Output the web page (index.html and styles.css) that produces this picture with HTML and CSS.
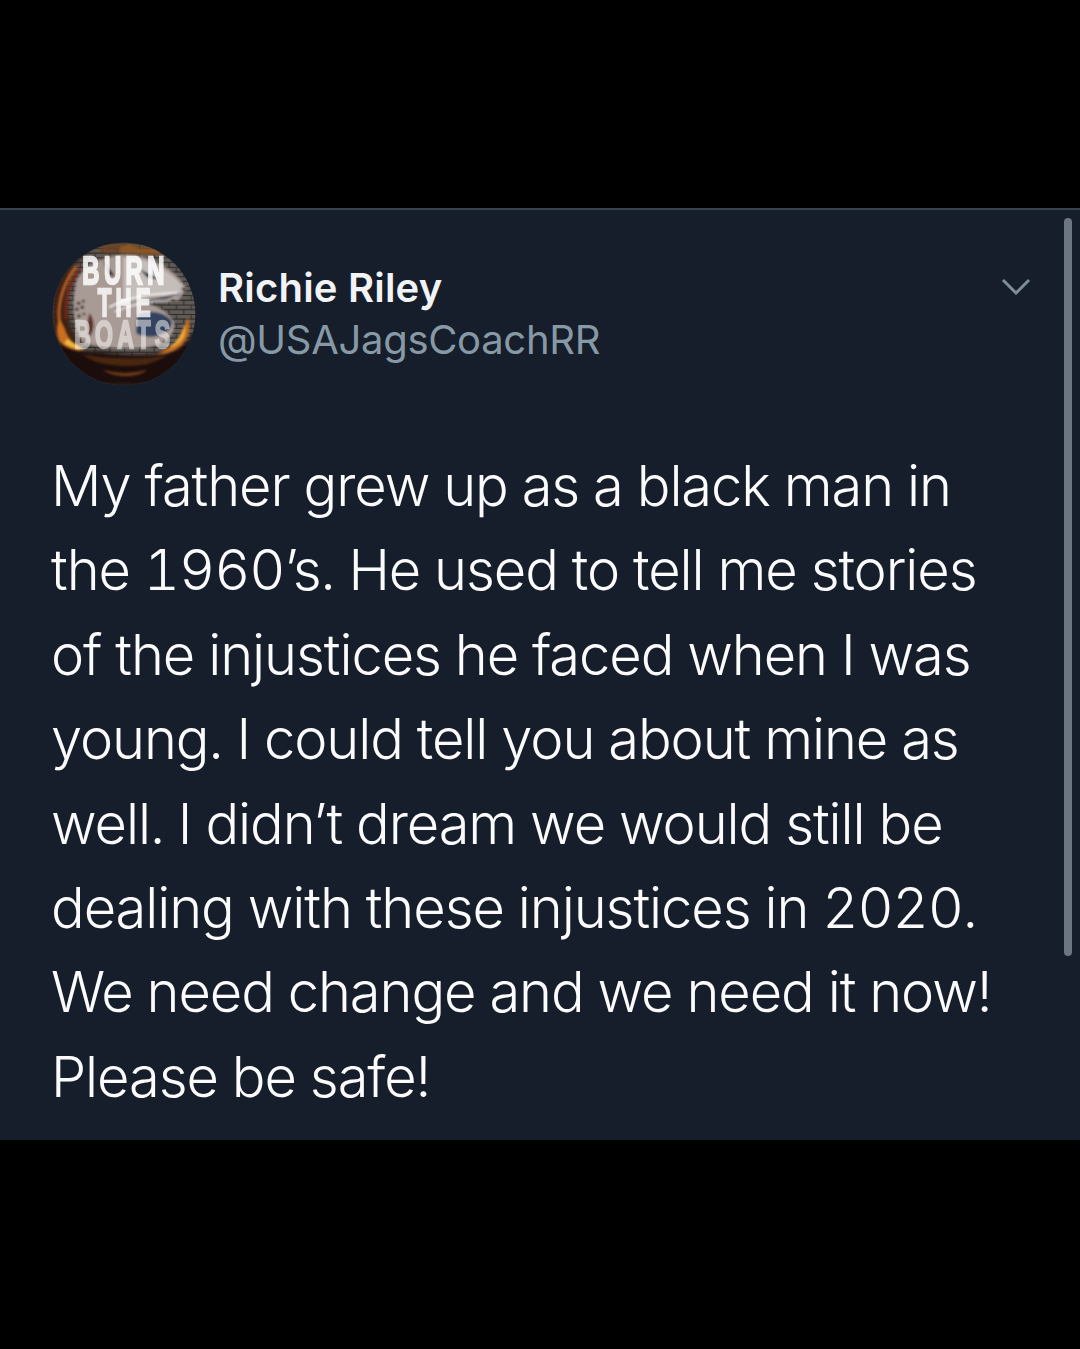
FILE: index.html
```html
<!DOCTYPE html>
<html lang="en">
<head>
<meta charset="utf-8">
<title>Richie Riley</title>
<link rel="stylesheet" href="styles.css">
</head>
<body>
<main class="tweet">
  <header class="head">
    <svg class="avatar" viewBox="38 38 428 428" aria-hidden="true">
      <defs>
        <clipPath id="c"><circle cx="252" cy="252" r="212"/></clipPath>
        <filter id="b2" x="-10%" y="-10%" width="120%" height="120%"><feGaussianBlur stdDeviation="2.5"/></filter>
        <filter id="b5" x="-20%" y="-20%" width="140%" height="140%"><feGaussianBlur stdDeviation="6"/></filter>
        <pattern id="brick" width="44" height="28" patternUnits="userSpaceOnUse">
          <rect width="44" height="28" fill="#5f5a56"/>
          <path d="M0 1H44M0 15H44M12 1V15M34 15V28" stroke="#2f2b29" stroke-width="3"/>
        </pattern>
      </defs>
      <g clip-path="url(#c)">
        <rect x="38" y="38" width="428" height="428" fill="url(#brick)"/>
        <g filter="url(#b5)">
          <path d="M38 38H190C130 70 95 110 85 170 76 240 90 300 130 340L60 380 38 300Z" fill="#3a2015"/>
          <path d="M170 48C250 36 320 50 360 70L260 66 190 70Z" fill="#6a4224"/>
          <path d="M38 345C70 340 120 370 170 362 230 372 310 380 370 368 410 360 450 330 466 300V466H38Z" fill="#1f0f08"/>
        </g>
        <g filter="url(#b2)">
          <path d="M110 110C70 160 50 230 62 285" fill="none" stroke="#b85d20" stroke-width="9"/>
          <path d="M122 118C84 165 74 215 80 268" fill="none" stroke="#7a2419" stroke-width="8"/>
          <path d="M60 265C50 290 50 315 62 335 76 350 100 360 126 362 106 345 84 325 76 295Z" fill="#c96e1c"/>
          <path d="M74 340C92 350 112 358 136 358 118 346 100 336 84 326Z" fill="#f2b840"/>
          <path d="M442 262C452 292 444 325 422 346 398 366 372 372 350 370 382 358 410 340 424 308Z" fill="#c76c1c"/>
          <path d="M432 285C438 305 432 325 414 340 404 348 394 352 384 355 406 338 422 318 432 285Z" fill="#f0aa3a"/>
          <path d="M130 372C200 386 310 390 380 374 350 398 300 410 240 406 190 404 150 392 130 372Z" fill="#4a2710"/>
          <path d="M190 418C230 430 280 430 320 418 300 442 220 444 190 418Z" fill="#6e3a16"/>
          <path d="M240 52 268 44 300 58 340 56 372 76 300 74 240 70Z" fill="#8a5628"/>
        </g>
        <g filter="url(#b2)">
          <path d="M108 170C112 120 170 84 250 76 330 72 400 118 440 176L412 214C380 200 340 204 300 218 340 222 380 240 400 275 410 310 370 350 310 352 240 358 170 350 128 335 102 290 96 220 108 170Z" fill="#a89a94"/>
          <path d="M250 84C320 82 390 122 432 176L404 204C360 190 300 196 250 222Z" fill="#c4bdba"/>
          <path d="M292 254C320 238 370 244 392 270 400 292 380 312 345 318 320 322 300 318 288 308Z" fill="#30425f"/>
          <path d="M300 222 415 192" fill="none" stroke="#27303f" stroke-width="5"/>
          <path d="M208 232C270 200 340 190 412 190" fill="none" stroke="#f2f2f2" stroke-width="5"/>
          <path d="M224 246C280 220 330 212 392 212" fill="none" stroke="#e8e8e8" stroke-width="4"/>
          <path d="M300 120 360 150 322 144Z" fill="#1f2533"/>
          <path d="M190 90 225 140 205 135Z" fill="#2e2e30"/>
          <path d="M150 250C165 270 165 300 150 320 142 295 142 270 150 250Z" fill="#5a3128"/>
          <path d="M420 176 436 172 434 186Z" fill="#2c2a2a"/>
          <circle cx="117" cy="220" r="5" fill="#33231d"/><circle cx="131" cy="214" r="4" fill="#33231d"/>
          <circle cx="112" cy="238" r="5" fill="#33231d"/><circle cx="128" cy="232" r="5" fill="#33231d"/>
          <circle cx="118" cy="258" r="5" fill="#33231d"/><circle cx="133" cy="252" r="4" fill="#33231d"/>
        </g>
        <text class="av av-a" transform="translate(128 164) scale(.6 1)">BURN</text>
        <text class="av av-b" transform="translate(174 258) scale(.56 1)">THE</text>
        <text class="av av-c" transform="translate(104 354) scale(.58 1)">BOATS</text>
      </g>
    </svg>
    <div class="names">
      <div class="name">Richie Riley</div>
      <div class="handle">@USAJagsCoachRR</div>
    </div>
    <svg class="chev" viewBox="0 0 30 18" aria-hidden="true"><path d="M2 3 15 16 28 3"/></svg>
  </header>
  <p class="body">My father grew up as a black man in<br>the 1960’s. He used to tell me stories<br>of the injustices he faced when I was<br>young. I could tell you about mine as<br>well. I didn’t dream we would still be<br>dealing with these injustices in 2020.<br>We need change and we need it now!<br>Please be safe!</p>
  <div class="thumb"></div>
</main>
</body>
</html>
```
FILE: styles.css
```css
html, body { margin: 0; padding: 0; background: #000; }
body { width: 1080px; height: 1349px; padding-top: 208px; box-sizing: border-box; font-family: Inter, "Liberation Sans", sans-serif; }
.tweet { position: relative; height: 932px; box-sizing: border-box; background: #151e2a; border-top: 2px solid #36434f; padding: 32px 52px 0; }
.head { display: flex; align-items: center; gap: 22px; }
.avatar { width: 144px; height: 144px; flex: none; }
.av { font-family: "Liberation Sans", sans-serif; font-weight: 700; font-size: 118px; letter-spacing: 22px; fill: #fff; stroke: #fff; stroke-width: 7px; }
.av-a { opacity: .85; }
.av-b { opacity: .8; }
.av-c { opacity: .5; }
.names { flex: 1; }
.name { color: #f2f3f5; font-size: 40px; line-height: 52px; font-weight: 600; letter-spacing: 0.2px; }
.handle { color: #8899a6; font-size: 40px; line-height: 52px; letter-spacing: -0.3px; }
.chev { align-self: flex-start; width: 30px; height: 18px; margin-top: 35px; margin-right: -3px; fill: none; stroke: #7f8c99; stroke-width: 3; }
.body { margin: 58px 0 0 -1px; color: #fbfbfb; font-size: 56px; line-height: 84.4px; font-weight: 300; letter-spacing: -1.08px; white-space: nowrap; font-variant-numeric: tabular-nums; }
.thumb { position: absolute; right: 8px; top: 8px; width: 8px; height: 738px; border-radius: 4px; background: #6c7682; }
```
